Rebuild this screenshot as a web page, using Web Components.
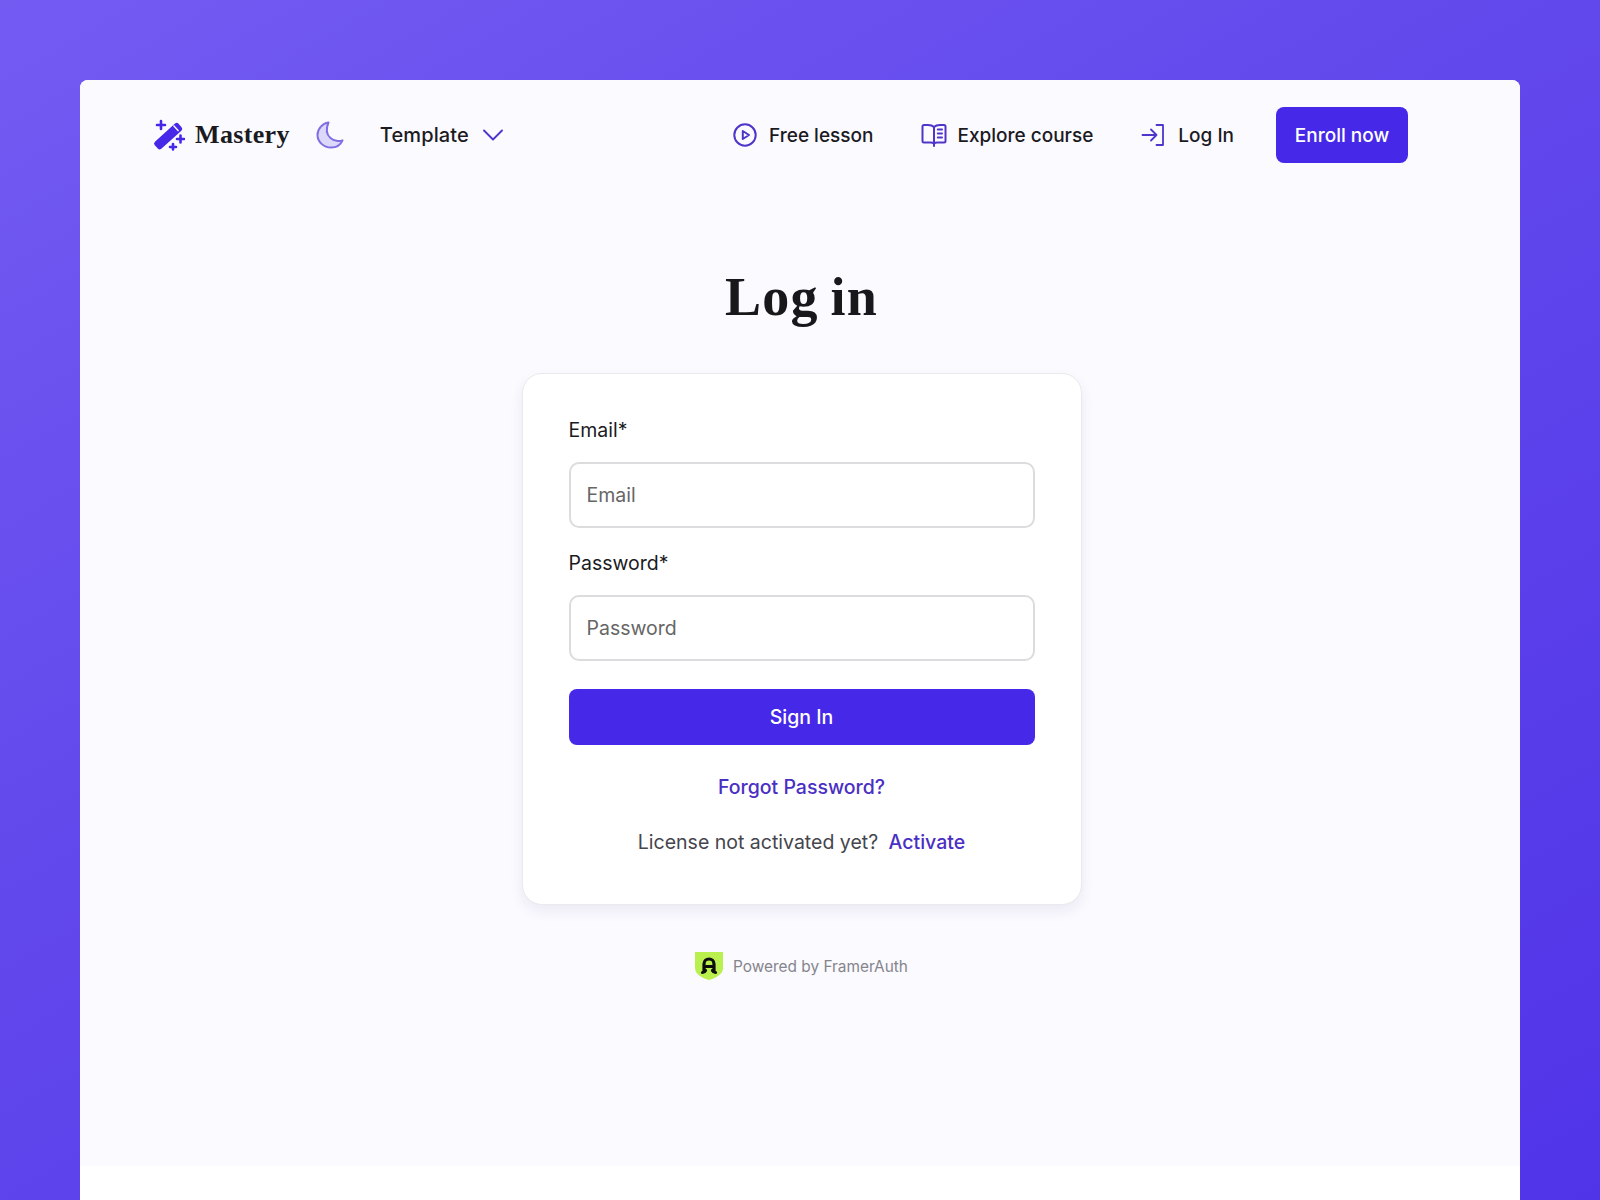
<!DOCTYPE html>
<html>
<head>
<meta charset="utf-8">
<title>Log in</title>
<style>
html, body { margin: 0; height: 100%; }
body {
    height: 1200px;
    overflow: hidden;
    font-family: 'Inter', 'Liberation Sans', sans-serif;
    background: linear-gradient(150deg, #735bf2 0%, #6249ec 40%, #5034e8 100%);
}
</style>
</head>
<body>
<app-window>
    <site-nav></site-nav>
    <page-title>Log in</page-title>
    <login-card></login-card>
    <powered-by></powered-by>
</app-window>

<script>
const ICONS = {
    play: `<svg width="24" height="24" viewBox="0 0 24 24" fill="none" stroke="#4f35c9" stroke-width="2" stroke-linejoin="round"><circle cx="12" cy="12" r="10.700"/><path d="M9.800 8 16 12l-6.200 4z"/></svg>`,
    book: `<svg width="26" height="24" viewBox="0 0 26 24" fill="none" stroke="#4f35c9" stroke-width="2" stroke-linejoin="round" stroke-linecap="round"><path d="M13 4C11.500 2.500 9.500 2 7 2H3a1.500 1.500 0 0 0-1.500 1.500V18A1.500 1.500 0 0 0 3 19.500h6.500c1.500 0 2.700.3 3.500 1 .8-.7 2-1 3.500-1H23a1.500 1.500 0 0 0 1.500-1.500V3.500A1.500 1.500 0 0 0 23 2h-4c-2.500 0-4.500.5-6 2zM13 4v19"/><path d="M16.800 6.500h4.200M16.800 10.500h4.200M16.800 14.500h4.200"/></svg>`,
    login: `<svg width="24" height="24" viewBox="0 0 24 24" fill="none" stroke="#4f35c9" stroke-width="1.800" stroke-linejoin="round" stroke-linecap="round"><path d="M1.500 12h14M10 6.500l5.500 5.500-5.500 5.500"/><path d="M15.500 2H22v20h-6.500"/></svg>`
};

class AppWindow extends HTMLElement {
    constructor() {
        super();
        this.attachShadow({mode: 'open'}).innerHTML = `
        <style>
        :host { display: block; box-sizing: border-box; margin: 80px 80px 0; height: 1120px; background: #fff; border-radius: 8px 8px 0 0; overflow: hidden; }
        .inner { height: 1086px; background: #fbfaff; display: flex; flex-direction: column; align-items: center; }
        </style>
        <div class="inner"><slot></slot></div>`;
    }
}

class SiteNav extends HTMLElement {
    constructor() {
        super();
        this.attachShadow({mode: 'open'}).innerHTML = `
        <style>
        :host { display: flex; box-sizing: border-box; width: 100%; justify-content: space-between; align-items: center; padding: 27px 112px 0 73px; color: #1b1b1f; font-family: 'Inter', 'Liberation Sans', sans-serif; }
        .left, .right { display: flex; align-items: center; }
        .logo { display: flex; align-items: center; gap: 10px; font: 700 26px 'Liberation Serif', serif; letter-spacing: .35px; }
        .moon { display: flex; margin-left: 26px; }
        .tpl { display: flex; align-items: center; margin-left: 36px; font-size: 20px; font-weight: 500; letter-spacing: .1px; }
        .tpl svg { margin-left: 14px; }
        nav-link + nav-link { margin-left: 48px; }
        .enroll { margin-left: 42px; width: 132px; height: 56px; display: flex; align-items: center; justify-content: center; background: #4629e8; color: #fff; border-radius: 8px; font-size: 19px; font-weight: 500; }
        </style>
        <div class="left">
            <div class="logo">
                <svg width="32" height="32" viewBox="0 0 32 32" fill="#4629e8">
                    <rect x="-1" y="12.500" width="32" height="9.500" rx="2.500" transform="rotate(-42 15 17)"/>
                    <path d="M8 2v8M4 6h8M27.500 16.500v7M24 20h7M20 25v5.500M17 28h6" fill="none" stroke="#4629e8" stroke-width="2.600" stroke-linecap="round"/>
                    <path d="M20.500 6.500l5 5.500" stroke="#fbfaff" stroke-width="1.400"/>
                </svg>
                <span>Mastery</span>
            </div>
            <div class="moon">
                <svg width="28" height="28" viewBox="0 0 28 28"><path d="M12.500 1.500C9.500 8.500 11 14 14.500 17s9 3.800 12 2.300C24.500 24 19.800 26.500 15 26.500 7.800 26.500 1.500 21 1.500 14 1.500 8 6.200 2.500 12.500 1.500z" fill="#dcd8fa" stroke="#7f6fe3" stroke-width="2" stroke-linejoin="round"/></svg>
            </div>
            <div class="tpl">Template
                <svg width="20" height="12" viewBox="0 0 20 12" fill="none" stroke="#4f35c9" stroke-width="1.900" stroke-linecap="round" stroke-linejoin="round"><path d="M1 1.500l9 9 9-9"/></svg>
            </div>
        </div>
        <div class="right">
            <nav-link icon="play" gap="12">Free lesson</nav-link>
            <nav-link icon="book" gap="10">Explore course</nav-link>
            <nav-link icon="login" gap="13">Log In</nav-link>
            <div class="enroll">Enroll now</div>
        </div>`;
    }
}

class NavLink extends HTMLElement {
    constructor() {
        super();
        const gap = this.getAttribute('gap') || 10;
        this.attachShadow({mode: 'open'}).innerHTML = `
        <style>
        :host { display: flex; align-items: center; gap: ${gap}px; font-size: 19px; font-weight: 500; }
        svg { display: block; }
        </style>
        ${ICONS[this.getAttribute('icon')]}<slot></slot>`;
    }
}

class PageTitle extends HTMLElement {
    constructor() {
        super();
        this.attachShadow({mode: 'open'}).innerHTML = `
        <style>
        :host { display: block; margin-top: 101px; margin-left: 3px; font: 700 54px/66px 'Liberation Serif', serif; letter-spacing: 1.200px; word-spacing: -3px; color: #18181b; }
        </style>
        <slot></slot>`;
    }
}

class FormField extends HTMLElement {
    constructor() {
        super();
        const label = this.getAttribute('label');
        this.attachShadow({mode: 'open'}).innerHTML = `
        <style>
        :host { display: block; }
        label { display: block; font-size: 19.500px; line-height: 28px; margin-bottom: 18px; color: #1b1b1f; }
        input { display: block; box-sizing: border-box; width: 100%; height: 66px; padding: 0 16px; border: 2px solid #dcdcdf; border-radius: 10px; background: #fff; font: 400 19.500px 'Inter', 'Liberation Sans', sans-serif; outline: none; }
        input::placeholder { color: #666; opacity: 1; }
        </style>
        <label>${label}*</label>
        <input type="${this.getAttribute('type')}" placeholder="${label}">`;
    }
}

class LoginCard extends HTMLElement {
    constructor() {
        super();
        this.attachShadow({mode: 'open'}).innerHTML = `
        <style>
        :host { display: block; box-sizing: border-box; width: 560px; margin: 43px 0 0 3px; padding: 42px 46px 0; height: 532px; background: #fff; border: 1px solid #e9e9ee; border-radius: 20px; box-shadow: 0 6px 14px rgba(30, 20, 90, .07); }
        form-field + form-field { margin-top: 21px; }
        .btn { margin-top: 28px; height: 56px; display: flex; align-items: center; justify-content: center; background: #4629e8; color: #fff; border-radius: 8px; font-size: 19.500px; font-weight: 500; }
        .link { color: #4a2fc4; font-weight: 500; }
        .forgot { margin-top: 28px; text-align: center; font-size: 19.500px; line-height: 28px; }
        .lic { margin-top: 27px; text-align: center; font-size: 19.500px; line-height: 28px; color: #45454d; }
        .lic .link { margin-left: 5px; }
        </style>
        <form-field label="Email" type="email"></form-field>
        <form-field label="Password" type="password"></form-field>
        <div class="btn">Sign In</div>
        <div class="forgot"><span class="link">Forgot Password?</span></div>
        <div class="lic">License not activated yet? <span class="link">Activate</span></div>`;
    }
}

class PoweredBy extends HTMLElement {
    constructor() {
        super();
        this.attachShadow({mode: 'open'}).innerHTML = `
        <style>
        :host { display: flex; align-items: center; gap: 10px; margin: 47px 0 0 3px; font-size: 15.400px; color: #85858c; }
        </style>
        <svg width="28" height="28" viewBox="0 0 28 28">
            <path d="M0 0h28v16c0 6-7 10-14 12C7 26 0 22 0 16z" fill="#b9f04e"/>
            <g fill="none" stroke="#0d0d0d" stroke-width="3.200" stroke-linecap="round">
                <path d="M9 18.500V12a5 5 0 0 1 10 0v6.500M9 14.500h10"/>
                <path d="M7.500 20.500c1.500 0 2.500-1 3-2M20.500 20.500c-1.500 0-2.500-1-3-2"/>
            </g>
        </svg>
        <span>Powered by FramerAuth</span>`;
    }
}

customElements.define('app-window', AppWindow);
customElements.define('nav-link', NavLink);
customElements.define('site-nav', SiteNav);
customElements.define('page-title', PageTitle);
customElements.define('form-field', FormField);
customElements.define('login-card', LoginCard);
customElements.define('powered-by', PoweredBy);
</script>
</body>
</html>
